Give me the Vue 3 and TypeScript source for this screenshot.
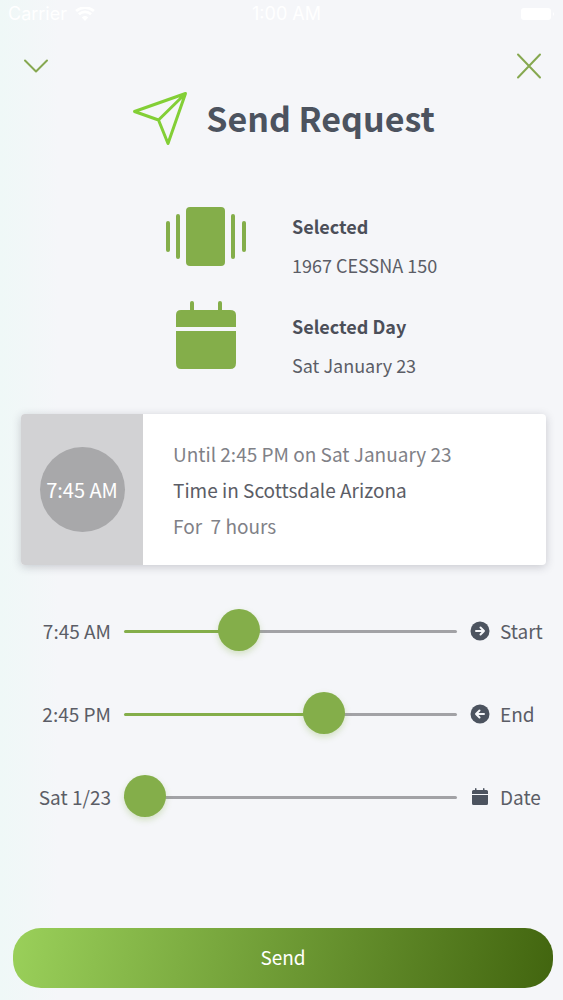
<script setup lang="ts">
import { computed, ref } from 'vue'

const start = ref(7.75)
const end = ref(14.75)
const dayOffset = ref(0)
const maxDays = 30

const firstDay = new Date(2021, 0, 23)

function formatTime(value: number): string {
  const hour = Math.floor(value)
  const minutes = Math.round((value - hour) * 60)
  const suffix = hour % 24 < 12 ? 'AM' : 'PM'
  return `${hour % 12 || 12}:${String(minutes).padStart(2, '0')} ${suffix}`
}

const day = computed(() => {
  const d = new Date(firstDay)
  d.setDate(d.getDate() + dayOffset.value)
  return d
})
const weekday = computed(() => day.value.toLocaleDateString('en-US', { weekday: 'short' }))
const longDay = computed(
  () => `${weekday.value} ${day.value.toLocaleDateString('en-US', { month: 'long' })} ${day.value.getDate()}`,
)
const shortDay = computed(() => `${weekday.value} ${day.value.getMonth() + 1}/${day.value.getDate()}`)
const startText = computed(() => formatTime(start.value))
const endText = computed(() => formatTime(end.value))
const hours = computed(() => Math.max(0, end.value - start.value))
</script>

<template>
  <main class="screen">
    <div class="status">
      <span class="carrier">
        Carrier
        <svg width="20" height="14" viewBox="0 0 20 14" aria-hidden="true">
          <path d="M10 14 6.8 10.4a5 5 0 0 1 6.4 0zM4.8 8.2 3 6.2a10.500 10.500 0 0 1 14 0l-1.800 2a7.800 7.800 0 0 0-10.400 0zM2 5 .2 3a15 15 0 0 1 19.600 0L18 5a12 12 0 0 0-16 0z" fill="#fff" />
        </svg>
      </span>
      <span class="clock">1:00 AM</span>
      <span class="battery">
        <svg width="34" height="14" viewBox="0 0 34 14" aria-hidden="true">
          <rect x="0" y="1" width="30" height="12" rx="3" fill="#fff" />
          <path d="M32 5v4q2-2 0-4z" fill="#fff" />
        </svg>
      </span>
    </div>

    <nav class="nav">
      <button type="button" class="icon-button" aria-label="Collapse">
        <svg width="28" height="28" viewBox="0 0 28 28" fill="none" stroke="#86a850" stroke-width="2" stroke-linecap="round" stroke-linejoin="round">
          <path d="m3 8.500 11 11 11-11" />
        </svg>
      </button>
      <button type="button" class="icon-button" aria-label="Close">
        <svg width="28" height="28" viewBox="0 0 28 28" fill="none" stroke="#86a850" stroke-width="2" stroke-linecap="round">
          <path d="m3 2.500 22 23M25 2.500l-22 23" />
        </svg>
      </button>
    </nav>

    <header class="title">
      <svg width="56" height="56" viewBox="0 0 56 56" fill="none" stroke="#83cf36" stroke-width="3" stroke-linejoin="round" aria-hidden="true">
        <path d="M53.500 2.500 2.500 20.500 26.500 29 36 52.500zM53.500 2.500 26.500 29" />
      </svg>
      <h1>Send Request</h1>
    </header>

    <section class="summary">
      <div class="summary-row">
        <svg width="82" height="100" viewBox="0 0 82 100" fill="#84ae4a" aria-hidden="true">
          <rect x="20" y="11" width="39" height="59" rx="4" />
          <rect x="0" y="25" width="4" height="31" rx="2" />
          <rect x="10" y="18" width="4" height="45" rx="2" />
          <rect x="65" y="18" width="4" height="45" rx="2" />
          <rect x="76" y="25" width="4" height="31" rx="2" />
        </svg>
        <div class="summary-text">
          <h2>Selected</h2>
          <p>1967 CESSNA 150</p>
        </div>
      </div>
      <div class="summary-row">
        <svg width="82" height="100" viewBox="0 0 82 100" fill="#84ae4a" aria-hidden="true">
          <rect x="24" y="5" width="4" height="12" rx="2" />
          <rect x="52" y="5" width="4" height="12" rx="2" />
          <path d="M10 31V19q0-5 5-5h49q6 0 6 5v12zM10 35h60v32q0 6-6 6H15q-5 0-5-6z" />
        </svg>
        <div class="summary-text">
          <h2>Selected Day</h2>
          <p>{{ longDay }}</p>
        </div>
      </div>
    </section>

    <section class="card">
      <div class="card-side">
        <span class="badge">{{ startText }}</span>
      </div>
      <div class="card-body">
        <p>Until {{ endText }} on {{ longDay }}</p>
        <p class="strong">Time in Scottsdale Arizona</p>
        <p>For&nbsp; {{ hours }} hours</p>
      </div>
    </section>

    <form class="controls" @submit.prevent>
      <div class="control">
        <output for="start">{{ startText }}</output>
        <input id="start" v-model.number="start" type="range" min="0" max="24" step="0.25" :style="{ '--part': start / 24 }" />
        <label for="start">
          <svg width="20" height="20" viewBox="0 0 20 20" fill="none" aria-hidden="true">
            <circle cx="10" cy="10" r="9.500" fill="#4c535f" />
            <path d="M6 10h8M10.500 6.500 14 10l-3.500 3.500" stroke="#f5f6f9" stroke-width="2" stroke-linecap="round" stroke-linejoin="round" />
          </svg>
          Start
        </label>
      </div>
      <div class="control">
        <output for="end">{{ endText }}</output>
        <input id="end" v-model.number="end" type="range" min="0" max="24" step="0.25" :style="{ '--part': end / 24 }" />
        <label for="end">
          <svg width="20" height="20" viewBox="0 0 20 20" fill="none" aria-hidden="true">
            <circle cx="10" cy="10" r="9.500" fill="#4c535f" />
            <path d="M14 10H6M9.500 6.500 6 10l3.500 3.500" stroke="#f5f6f9" stroke-width="2" stroke-linecap="round" stroke-linejoin="round" />
          </svg>
          End
        </label>
      </div>
      <div class="control">
        <output for="date">{{ shortDay }}</output>
        <input id="date" v-model.number="dayOffset" type="range" min="0" :max="maxDays" :style="{ '--part': dayOffset / maxDays }" />
        <label for="date">
          <svg width="20" height="20" viewBox="0 0 20 20" fill="#4c535f" aria-hidden="true">
            <rect x="5" y="1" width="1.500" height="4" rx=".7" />
            <rect x="13" y="1" width="1.500" height="4" rx=".7" />
            <path d="M2 7V4.500Q2 3 3.500 3h13Q18 3 18 4.500V7zM2 8h16v8.500q0 1.500-1.500 1.500h-13Q2 18 2 16.500z" />
          </svg>
          Date
        </label>
      </div>
    </form>

    <button type="button" class="send">Send</button>
  </main>
</template>

<style>
body {
  margin: 0;
}
</style>

<style scoped>
.screen {
  display: flex;
  flex-direction: column;
  box-sizing: border-box;
  min-height: 100vh;
  padding-bottom: 12px;
  background: linear-gradient(90deg, #eff8f7 0, #f5f6f9 60px);
  color: #5b5d66;
  font-family: "Noto Sans CJK JP", "Noto Sans CJK SC", "Noto Sans", sans-serif;
  font-size: 18px;
}

h1,
h2,
p {
  margin: 0;
}

.status {
  display: grid;
  grid-template-columns: 1fr auto 1fr;
  align-items: center;
  height: 28px;
  padding: 0 8px;
  color: #fff;
  font: 18px/28px "Inter", "Liberation Sans", sans-serif;
}

.carrier {
  display: flex;
  align-items: center;
  gap: 8px;
}

.clock {
  padding-left: 10px;
}

.battery {
  display: flex;
  justify-content: flex-end;
}

.nav {
  display: flex;
  justify-content: space-between;
  padding: 24px 20px 0 22px;
}

.icon-button {
  display: flex;
  padding: 0;
  border: 0;
  background: none;
  cursor: pointer;
}

.title {
  display: flex;
  align-items: center;
  justify-content: center;
  gap: 18px;
  height: 56px;
  margin-top: 11px;
  padding-left: 4px;
}

h1 {
  padding-bottom: 2px;
  color: #4c535f;
  font-size: 34px;
  font-weight: 700;
  line-height: 52px;
}

.summary {
  display: flex;
  flex-direction: column;
  margin-top: 49px;
  padding-left: 166px;
}

.summary-row {
  display: flex;
  align-items: center;
  gap: 44px;
  height: 100px;
}

.summary-text {
  line-height: 39px;
}

h2 {
  color: #4c4f59;
  font-size: 18px;
  font-weight: 700;
}

.card {
  display: flex;
  margin: 18px 17px 0 21px;
  border-radius: 4px;
  background: #fff;
  box-shadow: 0 2px 10px rgba(40, 40, 60, 0.22);
}

.card-side {
  display: flex;
  align-items: center;
  justify-content: center;
  box-sizing: border-box;
  width: 122px;
  border-radius: 4px 0 0 4px;
  background: #d2d2d4;
}

.badge {
  width: 85px;
  border-radius: 50%;
  background: #a8a8aa;
  color: #fff;
  font-size: 20px;
  line-height: 85px;
  text-align: center;
  white-space: nowrap;
}

.card-body {
  flex: 1;
  padding: 22px 30px 21px;
  color: #808187;
  font-size: 19px;
  line-height: 36px;
}

.strong {
  color: #5b5d66;
}

.controls {
  display: flex;
  flex-direction: column;
  margin-top: 25px;
}

.control {
  display: grid;
  grid-template-columns: 111px 1fr 93px;
  align-items: center;
  column-gap: 13px;
  height: 83px;
  font-size: 19px;
}

output {
  padding-bottom: 2px;
  text-align: right;
}

label {
  display: flex;
  align-items: center;
  gap: 10px;
  padding-bottom: 2px;
}

input {
  --fill: calc(21px + (100% - 42px) * var(--part));
  width: 100%;
  height: 42px;
  margin: 0;
  appearance: none;
  background: none;
  cursor: pointer;
}

input::-webkit-slider-runnable-track {
  height: 3px;
  border-radius: 2px;
  background: linear-gradient(90deg, #84ae4a var(--fill), #a2a2a6 var(--fill));
}

input::-webkit-slider-thumb {
  width: 42px;
  height: 42px;
  margin-top: -21px;
  appearance: none;
  border-radius: 50%;
  background: #84ae4a;
  box-shadow: 0 3px 6px rgba(132, 174, 74, 0.3);
}

.send {
  height: 60px;
  margin: auto 10px 0 13px;
  padding: 0 0 3px;
  border: 0;
  border-radius: 28px;
  background: linear-gradient(100deg, #9ad05a, #42650f);
  color: #fff;
  font-family: inherit;
  font-size: 19px;
  cursor: pointer;
}
</style>
